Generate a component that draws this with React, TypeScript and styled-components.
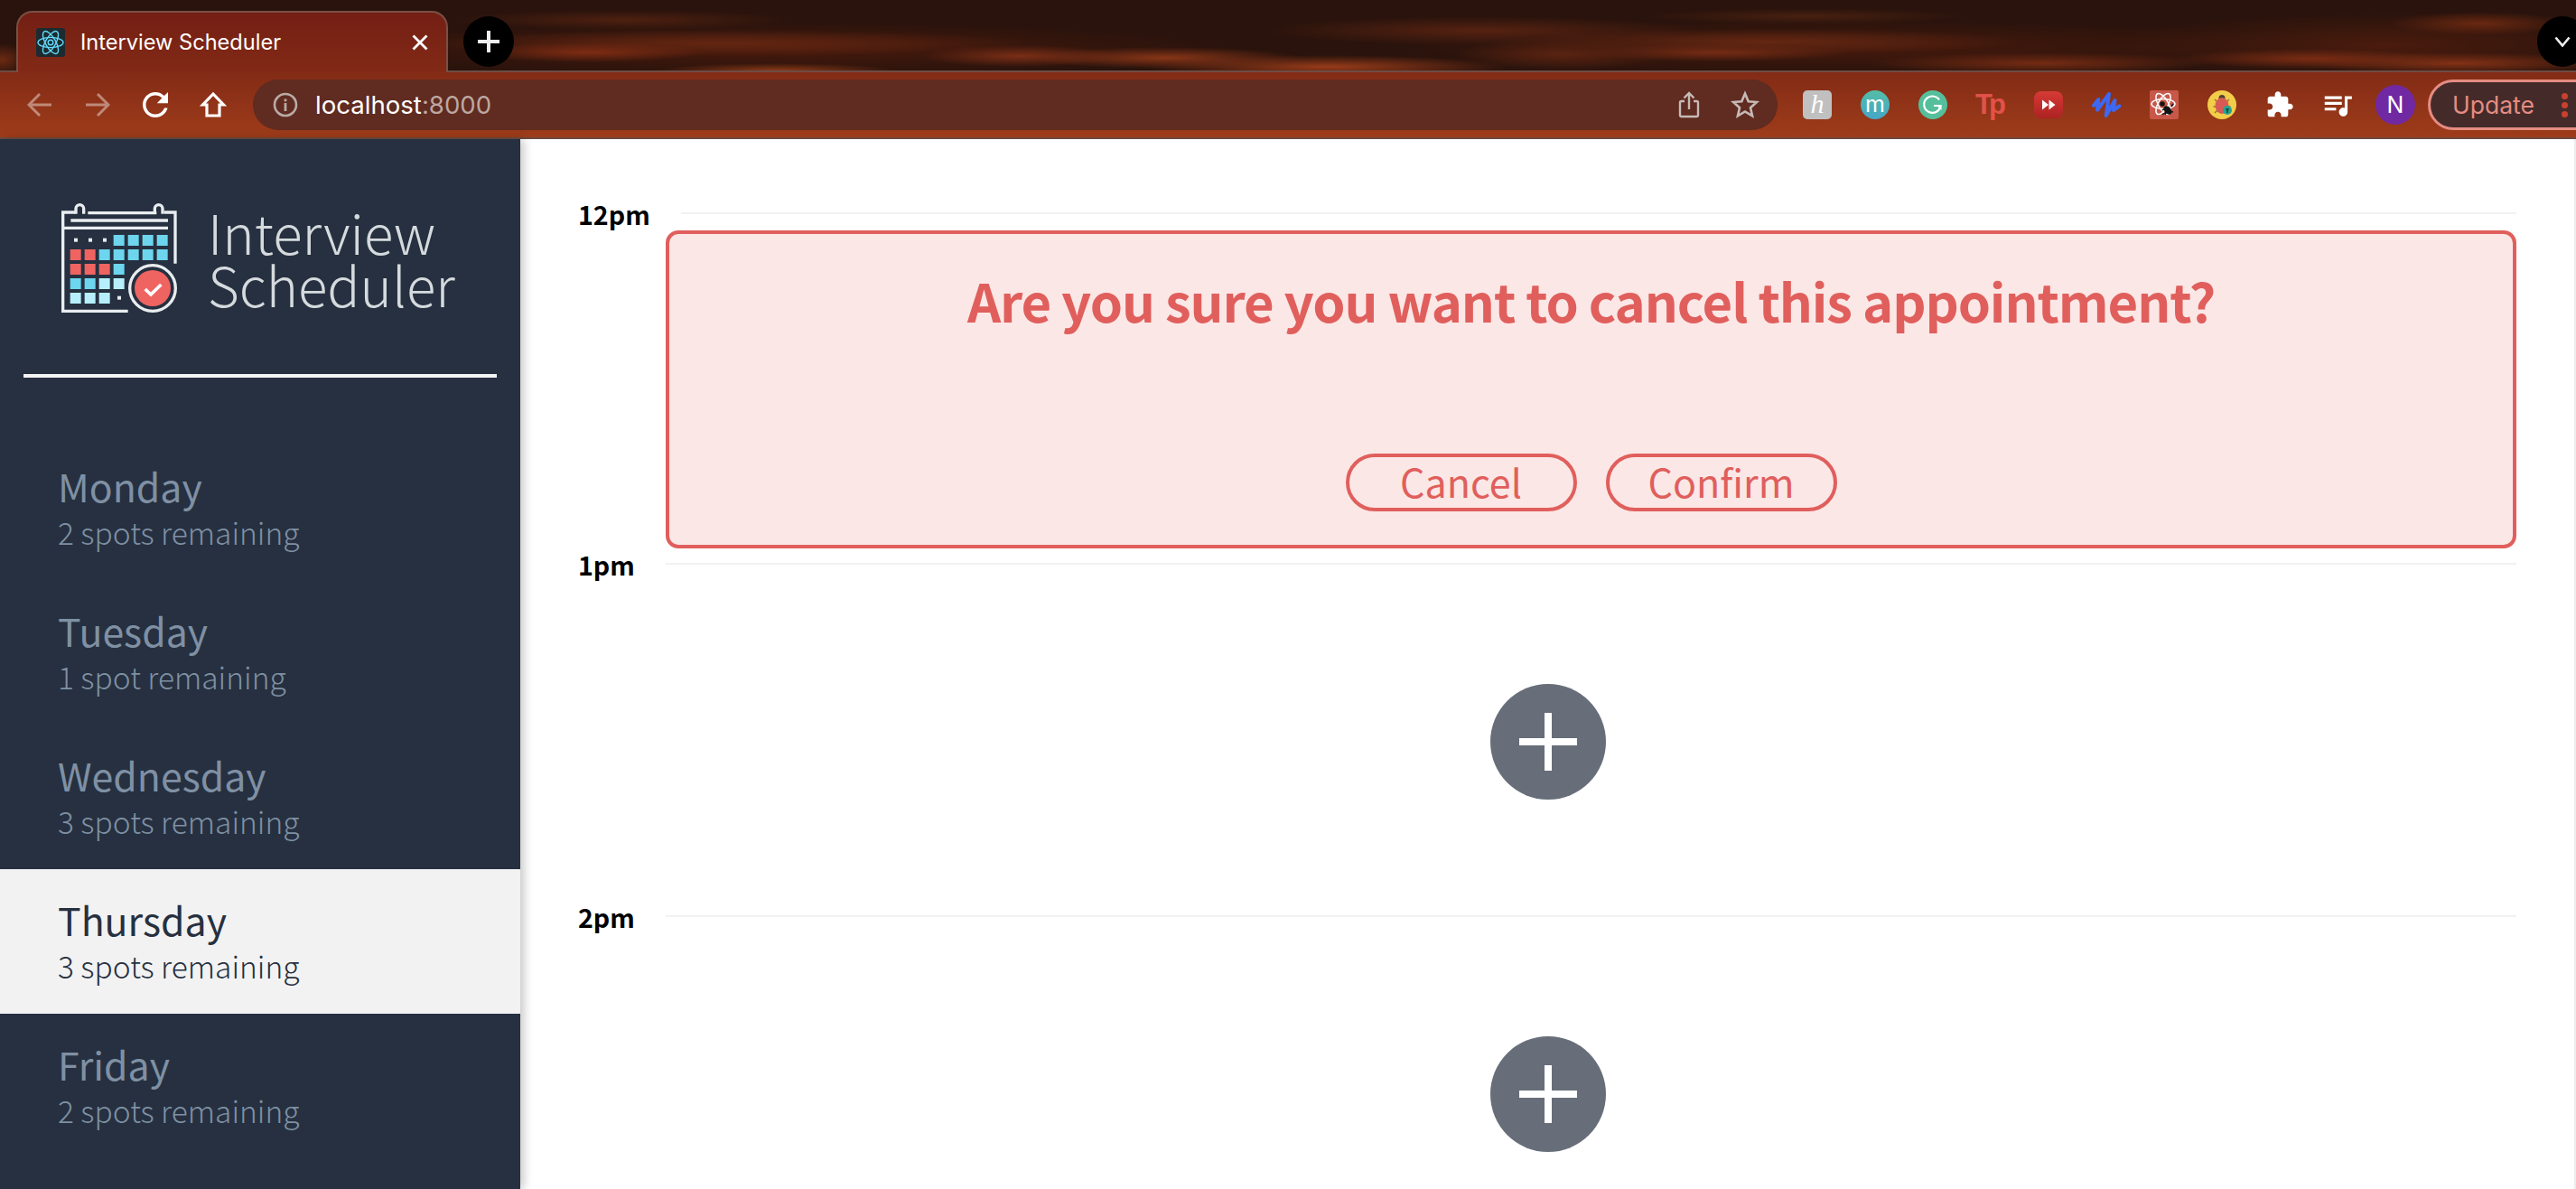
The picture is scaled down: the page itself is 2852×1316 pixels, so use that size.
import React from "react";
import styled, { createGlobalStyle } from "styled-components";

const Global = createGlobalStyle`
  html, body { margin: 0; padding: 0; background: #fff; overflow: hidden; }
  * { box-sizing: border-box; }
`;

const SANS = `"Noto Sans CJK SC", "Noto Sans", sans-serif`;
const UI = `Inter, "Liberation Sans", sans-serif`;
const SCRIPT = `"Liberation Serif", serif`;

const Page = styled.div`
  width: 2852px;
  height: 1316px;
  display: flex;
  flex-direction: column;
  overflow: hidden;
`;

const TabStrip = styled.div`
  height: 78px;
  flex: none;
  display: flex;
  align-items: flex-end;
  padding-left: 18px;
  position: relative;
  background:
    radial-gradient(ellipse 130px 11px at 650px 58px, #7e2c13, transparent),
    radial-gradient(ellipse 340px 15px at 800px 48px, #642611, transparent),
    radial-gradient(ellipse 190px 11px at 690px 22px, #4e2010, transparent),
    radial-gradient(ellipse 110px 12px at 1130px 62px, #7a2e16, transparent),
    radial-gradient(ellipse 150px 12px at 1290px 64px, #883517, transparent),
    radial-gradient(ellipse 200px 13px at 1470px 74px, #983b19, transparent),
    radial-gradient(ellipse 130px 8px at 860px 78px, #8a3a18, transparent),
    radial-gradient(ellipse 240px 16px at 1640px 34px, #562211, transparent),
    radial-gradient(ellipse 120px 18px at 1730px 60px, #5a2311, transparent),
    radial-gradient(ellipse 280px 14px at 1960px 46px, #642712, transparent),
    radial-gradient(ellipse 150px 10px at 1900px 58px, #762c14, transparent),
    radial-gradient(ellipse 180px 9px at 2000px 18px, #482010, transparent),
    radial-gradient(ellipse 190px 12px at 2260px 70px, #742b13, transparent),
    radial-gradient(ellipse 150px 11px at 2560px 65px, #7a2c13, transparent),
    radial-gradient(ellipse 100px 13px at 2745px 26px, #6a2811, transparent),
    radial-gradient(ellipse 170px 12px at 2720px 70px, #823115, transparent),
    radial-gradient(ellipse 30px 18px at 2px 66px, #6c2a13, transparent),
    radial-gradient(ellipse 520px 30px at 860px 54px, #47190c, transparent),
    radial-gradient(ellipse 520px 30px at 2050px 52px, #46190c, transparent),
    radial-gradient(ellipse 320px 36px at 2640px 50px, #4a1b0d, transparent),
    #29130c;
`;

const Tab = styled.div`
  width: 478px;
  height: 68px;
  margin-bottom: -2px;
  padding: 0 20px 0 20px;
  display: flex;
  align-items: center;
  border: 2px solid #7a4f44;
  border-bottom: none;
  border-radius: 18px 18px 0 0;
  background: linear-gradient(#741f14, #822a16);
  position: relative;
  z-index: 2;
`;

const TabTitle = styled.span`
  margin-left: 17px;
  flex: 1;
  font: 400 23.6px/32px ${UI};
  color: #fff;
  white-space: nowrap;
`;

const StripButton = styled.div`
  width: 56px;
  height: 56px;
  border-radius: 50%;
  background: #000;
  display: flex;
  align-items: center;
  justify-content: center;
  margin-bottom: 4px;
  flex: none;
`;

const NewTab = styled(StripButton)`
  margin-left: 17px;
`;

const TabMenu = styled(StripButton)`
  position: absolute;
  left: 2809px;
  bottom: 4px;
  margin: 0;
`;

const Toolbar = styled.div`
  height: 76px;
  flex: none;
  display: flex;
  align-items: center;
  padding-left: 28px;
  border-top: 2px solid #6e4c44;
  border-bottom: 2px solid #6d4a42;
  background: linear-gradient(#832b16, #9e3c1a);
`;

const NavGroup = styled.div`
  display: flex;
  gap: 32px;
  flex: none;
`;

const NavButton = styled.div<{ $dim?: boolean }>`
  width: 32px;
  height: 32px;
  display: flex;
  align-items: center;
  justify-content: center;
  opacity: ${(p) => (p.$dim ? 0.42 : 1)};
`;

const Omnibox = styled.div`
  width: 1688px;
  height: 56px;
  margin-left: 28px;
  padding: 0 20px 0 22px;
  border-radius: 28px;
  background: #602b20;
  display: flex;
  align-items: center;
  flex: none;
`;

const Url = styled.div`
  margin-left: 19px;
  flex: 1;
  font: 400 27.6px/34px ${UI};
  color: #fff;
`;

const UrlPort = styled.span`
  color: #bda7a1;
`;

const OmniActions = styled.div`
  display: flex;
  align-items: center;
  gap: 34px;
`;

const Extensions = styled.div`
  margin-left: 28px;
  display: flex;
  align-items: center;
  gap: 32px;
  flex: none;
`;

const ExtSlot = styled.div`
  width: 32px;
  height: 32px;
  display: flex;
  align-items: center;
  justify-content: center;
  flex: none;
`;

const TextBadge = styled.div<{ $bg: string; $round?: boolean; $family: string; $size: number; $italic?: boolean }>`
  width: 32px;
  height: 32px;
  border-radius: ${(p) => (p.$round ? "50%" : "5px")};
  background: ${(p) => p.$bg};
  color: #fff;
  font-family: ${(p) => p.$family};
  font-size: ${(p) => p.$size}px;
  font-style: ${(p) => (p.$italic ? "italic" : "normal")};
  line-height: 30px;
  text-align: center;
`;

const TpMark = styled.div`
  font: 700 31px/32px "Liberation Sans", sans-serif;
  letter-spacing: -4px;
  color: #e2524a;
  margin-left: -4px;
`;

const Avatar = styled.div`
  width: 44px;
  height: 44px;
  margin: 0 -6px;
  flex: none;
  border-radius: 50%;
  background: #7029a3;
  color: #fff;
  font: 400 25px/44px ${UI};
  text-align: center;
`;

const UpdatePill = styled.div`
  margin-left: 20px;
  width: 200px;
  height: 56px;
  flex: none;
  border: 3px solid #e58c82;
  border-radius: 28px;
  background: #442b2a;
  color: #e58c82;
  font: 400 26.5px/50px ${UI};
  padding-left: 24px;
  display: flex;
  position: relative;
`;

const Kebab = styled.div`
  position: absolute;
  left: 145px;
  top: 12px;
  display: flex;
  flex-direction: column;
  gap: 3px;
`;

const KebabDot = styled.i`
  display: block;
  width: 7px;
  height: 7px;
  border-radius: 50%;
  background: #c9402e;
`;

const Body = styled.div`
  flex: 1;
  min-height: 0;
  display: flex;
`;

const Sidebar = styled.aside`
  width: 576px;
  flex: none;
  background: #263040;
  box-shadow: 4px 0 10px rgba(0, 0, 0, 0.22);
  position: relative;
  z-index: 1;
  font-family: ${SANS};
`;

const Brand = styled.div`
  height: 194px;
  padding: 66px 0 0 60px;
  display: flex;
  align-items: flex-start;
`;

const BrandName = styled.div`
  margin-left: 20px;
  margin-top: 7px;
  font-family: ${SANS};
  font-weight: 300;
  font-size: 60px;
  line-height: 58px;
  color: #d5dadd;
`;

const Divider = styled.hr`
  margin: 66px 26px 64px;
  height: 4px;
  border: none;
  background: #f3f4f4;
`;

const DayRow = styled.div<{ $selected?: boolean }>`
  height: 160px;
  padding: 27px 0 0 64px;
  background: ${(p) => (p.$selected ? "#f2f2f2" : "transparent")};
  color: ${(p) => (p.$selected ? "#263040" : "#7f90a4")};
`;

const DayName = styled.div`
  font-size: 42.8px;
  font-weight: 400;
  line-height: 56px;
`;

const DaySpots = styled.div`
  font-size: 33.5px;
  font-weight: 300;
  line-height: 48px;
`;

const Main = styled.main`
  flex: 1;
  min-width: 0;
  padding: 0 64px;
  border-right: 2px solid #ededed;
  font-family: ${SANS};
`;

const Rows = styled.div`
  padding-top: 81px;
`;

const TimeHeader = styled.div`
  height: 2px;
  display: flex;
  align-items: center;
`;

const TimeLabel = styled.div`
  font-size: 28.6px;
  font-weight: 700;
  line-height: 44px;
  color: #000;
  margin-top: 1px;
  flex: none;
`;

const TimeLine = styled.div`
  flex: 1;
  height: 2px;
  margin-left: 34px;
  background: #f2f2f2;
`;

const ConfirmCard = styled.section`
  margin: 18px 0 16px 97px;
  height: 352px;
  padding: 33px 0 37px;
  border: 4px solid #e05f5c;
  border-radius: 14px;
  background: #fbe7e6;
  color: #e05f5c;
  display: flex;
  flex-direction: column;
  justify-content: space-between;
  align-items: center;
`;

const ConfirmTitle = styled.h1`
  margin: 0;
  font-size: 58px;
  font-weight: 700;
  line-height: 80px;
  letter-spacing: -1.1px;
  white-space: nowrap;
`;

const ConfirmActions = styled.div`
  display: flex;
  gap: 32px;
`;

const PillButton = styled.button`
  width: 256px;
  height: 64px;
  padding: 0 0 3px;
  border: 4px solid #e05f5c;
  border-radius: 32px;
  background: transparent;
  color: #e05f5c;
  font-family: ${SANS};
  font-size: 43px;
  font-weight: 400;
  line-height: 53px;
`;

const AddSlot = styled.div`
  height: 388px;
  padding: 132px 0 0 1010px;
`;

const AddButton = styled.div`
  width: 128px;
  height: 128px;
  border-radius: 50%;
  background: #676e79;
  display: flex;
  align-items: center;
  justify-content: center;
`;

const Favicon = () => (
  <svg width="32" height="32" viewBox="0 0 32 32" fill="none" style={{ flex: "none" }}>
    <rect width="32" height="32" rx="3" fill="#1d2b30" />
    <g stroke="#61dafb" strokeWidth="1.4">
      <ellipse cx="16" cy="16" rx="14" ry="5.6" />
      <ellipse cx="16" cy="16" rx="14" ry="5.6" transform="rotate(60 16 16)" />
      <ellipse cx="16" cy="16" rx="14" ry="5.6" transform="rotate(120 16 16)" />
      <circle cx="16" cy="16" r="2.8" />
    </g>
  </svg>
);

const CloseGlyph = () => (
  <svg width="18" height="18" viewBox="0 0 18 18" stroke="#fff" strokeWidth="2.8" strokeLinecap="butt">
    <path d="M1.5 1.5 16.5 16.5M16.5 1.5 1.5 16.5" />
  </svg>
);

const PlusGlyph = ({ size, stroke, color }: { size: number; stroke: number; color: string }) => (
  <svg width={size} height={size} viewBox={`0 0 ${size} ${size}`}>
    <rect x={(size - stroke) / 2} width={stroke} height={size} fill={color} />
    <rect y={(size - stroke) / 2} width={size} height={stroke} fill={color} />
  </svg>
);

const ChevronGlyph = () => (
  <svg width="18" height="12" viewBox="0 0 18 12" fill="none" stroke="#eee" strokeWidth="2.6">
    <path d="M1.5 1.5 9 10.5 16.5 1.5" />
  </svg>
);

const ArrowGlyph = ({ flip }: { flip?: boolean }) => (
  <svg width="28" height="28" viewBox="0 0 28 28" fill="none" stroke="#fff" strokeWidth="3" style={{ transform: flip ? "scaleX(-1)" : undefined }}>
    <path d="M27 14H2M14 2 2 14l12 12" />
  </svg>
);

const ReloadGlyph = () => (
  <svg width="42" height="42" viewBox="0 0 24 24" fill="#fff" style={{ flex: "none" }}>
    <path d="M17.65 6.35C16.2 4.9 14.21 4 12 4c-4.42 0-7.99 3.58-7.99 8s3.57 8 7.99 8c3.73 0 6.84-2.55 7.73-6h-2.08c-.82 2.33-3.04 4-5.65 4-3.31 0-6-2.69-6-6s2.69-6 6-6c1.66 0 3.14.69 4.22 1.78L13 11h7V4l-2.35 2.35z" />
  </svg>
);

const HomeGlyph = () => (
  <svg width="30" height="30" viewBox="0 0 30 30" fill="none" stroke="#fff" strokeWidth="3.2" strokeLinejoin="miter">
    <path d="M15 3 3.5 15H8v12h14V15h4.500z" />
  </svg>
);

const InfoGlyph = () => (
  <svg width="28" height="28" viewBox="0 0 28 28" fill="none" style={{ flex: "none" }}>
    <circle cx="14" cy="14" r="12" stroke="#b9aaa6" strokeWidth="2.6" />
    <rect x="12.600" y="12" width="2.800" height="9" fill="#b9aaa6" />
    <rect x="12.600" y="7.500" width="2.800" height="2.800" fill="#b9aaa6" />
  </svg>
);

const ShareGlyph = () => (
  <svg width="24" height="30" viewBox="0 0 24 30" fill="none" stroke="#c6bab6" strokeWidth="2.4">
    <path d="M7 11H3.500A1.500 1.500 0 0 0 2 12.500v14A1.500 1.500 0 0 0 3.500 28h17a1.500 1.500 0 0 0 1.500-1.500v-14a1.500 1.500 0 0 0-1.500-1.500H17" />
    <path d="M12 20V2M6.500 7.500 12 2l5.500 5.500" />
  </svg>
);

const StarGlyph = () => (
  <svg width="32" height="32" viewBox="0 0 32 32" fill="none" stroke="#c6bab6" strokeWidth="2.600" strokeLinejoin="miter">
    <path d="M16 3.500l3.700 8.700 9.300.8-7 6.200 2.100 9.200-8.100-4.900-8.100 4.900 2.100-9.200-7-6.200 9.300-.8z" />
  </svg>
);

const GrammarlyIcon = () => (
  <svg width="32" height="32" viewBox="0 0 32 32" fill="none">
    <circle cx="16" cy="16" r="16" fill="#55bf9c" />
    <path d="M23 10.500A9.200 9.200 0 1 0 24.500 17H17" stroke="#fff" strokeWidth="2.200" />
    <path d="M25.500 17.500v4.500l-4.500-4.500z" fill="#fff" />
  </svg>
);

const ForwardIcon = () => (
  <svg width="32" height="32" viewBox="0 0 32 32">
    <defs>
      <linearGradient id="ffGrad" x1="0" y1="0" x2="0" y2="1">
        <stop offset="0" stopColor="#d63a36" />
        <stop offset="1" stopColor="#ad2222" />
      </linearGradient>
    </defs>
    <rect y="1" width="32" height="30" rx="8" fill="url(#ffGrad)" />
    <path d="M9 10.500 16 16l-7 5.500zM16.500 10.500 23.500 16l-7 5.500z" fill="#fff" />
  </svg>
);

const WaveIcon = () => (
  <svg width="32" height="32" viewBox="0 0 32 32" fill="none" stroke="#3c68f2" strokeWidth="4" strokeLinecap="round" strokeLinejoin="round">
    <path d="M2 16.700 7.300 10 6 21.700 19 4l-3.300 24 9.800-17L24 22l6.500-4.700" />
  </svg>
);

const ReactBugIcon = () => (
  <svg width="32" height="32" viewBox="0 0 32 32">
    <rect width="32" height="32" rx="2" fill="#c8584a" />
    <g fill="none" stroke="#fff" strokeWidth="1.500">
      <ellipse cx="15" cy="15" rx="13" ry="5.500" />
      <ellipse cx="15" cy="15" rx="13" ry="5.500" transform="rotate(60 15 15)" />
      <ellipse cx="15" cy="15" rx="13" ry="5.500" transform="rotate(120 15 15)" />
    </g>
    <g fill="#141414" stroke="#141414">
      <circle cx="14" cy="15" r="2.800" stroke="none" />
      <ellipse cx="20" cy="22" rx="3.600" ry="5.500" transform="rotate(-40 20 22)" stroke="none" />
      <path d="M14 22l4-3M17 27l2-4M24 18l2-3M26 24l-4-1M14 27l4-3" strokeWidth="1.500" fill="none" />
    </g>
  </svg>
);

const BugIcon = () => (
  <svg width="32" height="32" viewBox="0 0 32 32">
    <circle cx="16" cy="16" r="16" fill="#f3cd49" />
    <path d="M8 10l3 3M24 10l-3 3M6.500 18H10M25.500 18H22M8 25l3-3M24 25l-3-3" stroke="#8a7430" strokeWidth="1.300" />
    <circle cx="16" cy="8.500" r="3.500" fill="#4a4030" />
    <ellipse cx="16" cy="17" rx="7.500" ry="9" fill="#d95a55" />
    <circle cx="22" cy="22" r="5" fill="#24a392" />
    <path d="M20 20h4l-1.200 3v2h-1.600v-2z" fill="#164d48" />
  </svg>
);

const PuzzleIcon = () => (
  <svg width="32" height="32" viewBox="0 0 24 24" fill="#fff">
    <path d="M20.500 11H19V7c0-1.100-.9-2-2-2h-4V3.500C13 2.120 11.880 1 10.500 1S8 2.120 8 3.500V5H4c-1.100 0-1.990.9-1.990 2v3.800H3.500c1.490 0 2.700 1.210 2.700 2.700s-1.210 2.700-2.700 2.700H2V20c0 1.100.9 2 2 2h3.800v-1.500c0-1.490 1.210-2.700 2.700-2.700 1.490 0 2.700 1.210 2.700 2.700V22H17c1.100 0 2-.9 2-2v-4h1.500c1.380 0 2.500-1.120 2.500-2.500S21.880 11 20.500 11z" />
  </svg>
);

const QueueIcon = () => (
  <svg width="38" height="38" viewBox="0 0 24 24" fill="#fff" style={{ flex: "none" }}>
    <path d="M15 6H3v2h12V6zm0 4H3v2h12v-2zM3 16h8v-2H3v2zM17 6v8.180c-.31-.11-.65-.18-1-.18-1.660 0-3 1.340-3 3s1.340 3 3 3 3-1.340 3-3V8h3V6h-5z" />
  </svg>
);

const CalendarLogo = () => {
  const cyan = "#6dd5ee";
  const pale = "#b6effb";
  const red = "#ef6461";
  const cells: [number, number, string][] = [
    [3, 0, cyan], [4, 0, cyan], [5, 0, cyan], [6, 0, cyan],
    [0, 1, red], [1, 1, red], [2, 1, cyan], [3, 1, cyan], [4, 1, cyan], [5, 1, cyan], [6, 1, cyan],
    [0, 2, red], [1, 2, red], [2, 2, red], [3, 2, cyan],
    [0, 3, cyan], [1, 3, cyan], [2, 3, pale], [3, 3, pale],
    [0, 4, pale], [1, 4, pale], [2, 4, pale],
  ];
  return (
    <svg width="150" height="135" viewBox="0 0 450 405" fill="none" style={{ flex: "none" }}>
      <g stroke="#e9edef" strokeWidth="10">
        <path d="M70 45H29v328h216" />
        <path d="M112 47H340" />
        <path d="M365 45h37v170" />
        <path d="M55 72H378" />
        <path d="M29 97H378" />
        <path d="M72 50V33a13 13 0 0 1 26 0v17" />
        <path d="M334 50V33a13 13 0 0 1 26 0v17" />
      </g>
      {cells.map(([c, r, color]) => (
        <rect key={`${c}-${r}`} x={53 + c * 48} y={120 + r * 48} width="36" height="36" fill={color} />
      ))}
      <g fill="#e9edef">
        <rect x="66" y="131" width="12" height="12" />
        <rect x="114" y="131" width="12" height="12" />
        <rect x="162" y="131" width="12" height="12" />
        <rect x="210" y="323" width="12" height="12" />
      </g>
      <circle cx="327" cy="297" r="76" stroke="#e9edef" strokeWidth="10" />
      <circle cx="327" cy="297" r="60" fill={red} />
      <path d="M302 300l19 18 34-33" stroke="#fff" strokeWidth="11" />
    </svg>
  );
};

const days = [
  { name: "Monday", spots: "2 spots remaining" },
  { name: "Tuesday", spots: "1 spot remaining" },
  { name: "Wednesday", spots: "3 spots remaining" },
  { name: "Thursday", spots: "3 spots remaining", selected: true },
  { name: "Friday", spots: "2 spots remaining" },
];

const TimeRow = ({ label }: { label: string }) => (
  <TimeHeader>
    <TimeLabel>{label}</TimeLabel>
    <TimeLine />
  </TimeHeader>
);

const EmptySlot = () => (
  <AddSlot>
    <AddButton>
      <PlusGlyph size={64} stroke={8} color="#fff" />
    </AddButton>
  </AddSlot>
);

export default function App() {
  return (
    <Page>
      <Global />
      <TabStrip>
        <Tab>
          <Favicon />
          <TabTitle>Interview Scheduler</TabTitle>
          <CloseGlyph />
        </Tab>
        <NewTab>
          <PlusGlyph size={24} stroke={4} color="#eee" />
        </NewTab>
        <TabMenu>
          <ChevronGlyph />
        </TabMenu>
      </TabStrip>
      <Toolbar>
        <NavGroup>
          <NavButton $dim><ArrowGlyph /></NavButton>
          <NavButton $dim><ArrowGlyph flip /></NavButton>
          <NavButton><ReloadGlyph /></NavButton>
          <NavButton><HomeGlyph /></NavButton>
        </NavGroup>
        <Omnibox>
          <InfoGlyph />
          <Url>localhost<UrlPort>:8000</UrlPort></Url>
          <OmniActions>
            <ShareGlyph />
            <StarGlyph />
          </OmniActions>
        </Omnibox>
        <Extensions>
          <TextBadge $bg="#c0c0c0" $family={SCRIPT} $italic $size={30}>h</TextBadge>
          <TextBadge $bg="linear-gradient(#55bda6, #45a6c8)" $round $family={UI} $size={25}>m</TextBadge>
          <ExtSlot><GrammarlyIcon /></ExtSlot>
          <ExtSlot><TpMark>Tp</TpMark></ExtSlot>
          <ExtSlot><ForwardIcon /></ExtSlot>
          <ExtSlot><WaveIcon /></ExtSlot>
          <ExtSlot><ReactBugIcon /></ExtSlot>
          <ExtSlot><BugIcon /></ExtSlot>
          <ExtSlot><PuzzleIcon /></ExtSlot>
          <ExtSlot><QueueIcon /></ExtSlot>
          <Avatar>N</Avatar>
        </Extensions>
        <UpdatePill>
          Update
          <Kebab><KebabDot /><KebabDot /><KebabDot /></Kebab>
        </UpdatePill>
      </Toolbar>
      <Body>
        <Sidebar>
          <Brand>
            <CalendarLogo />
            <BrandName>Interview<br />Scheduler</BrandName>
          </Brand>
          <Divider />
          {days.map((d) => (
            <DayRow key={d.name} $selected={d.selected}>
              <DayName>{d.name}</DayName>
              <DaySpots>{d.spots}</DaySpots>
            </DayRow>
          ))}
        </Sidebar>
        <Main>
          <Rows>
            <TimeRow label="12pm" />
            <ConfirmCard>
              <ConfirmTitle>Are you sure you want to cancel this appointment?</ConfirmTitle>
              <ConfirmActions>
                <PillButton>Cancel</PillButton>
                <PillButton>Confirm</PillButton>
              </ConfirmActions>
            </ConfirmCard>
            <TimeRow label="1pm" />
            <EmptySlot />
            <TimeRow label="2pm" />
            <EmptySlot />
          </Rows>
        </Main>
      </Body>
    </Page>
  );
}
